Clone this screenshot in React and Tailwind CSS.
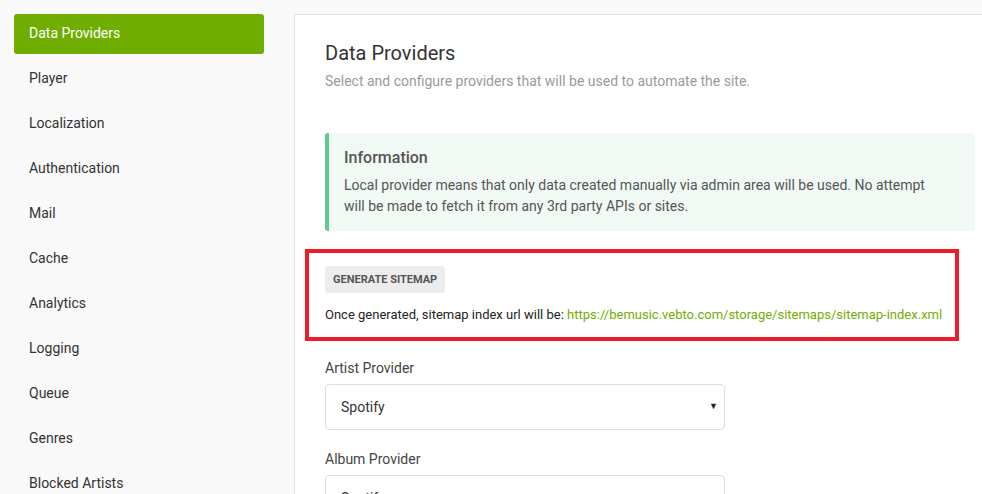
import React from 'react';

const navItems = [
  'Data Providers',
  'Player',
  'Localization',
  'Authentication',
  'Mail',
  'Cache',
  'Analytics',
  'Logging',
  'Queue',
  'Genres',
  'Blocked Artists',
];

const SelectBox = ({ value }) => (
  <div className="flex h-[46px] w-[400px] shrink-0 items-center justify-between rounded-[4px] border border-[#dcdcdc] bg-white pl-[15px] pr-[6px] text-[14px] text-[#333]">
    <span>{value}</span>
    <span className="text-[9px] text-[#222]">▼</span>
  </div>
);

export default function App() {
  return (
    <div
      className="flex h-[494px] w-[982px] overflow-hidden bg-[#f9f9f9]"
      style={{ fontFamily: 'Roboto, "Liberation Sans", sans-serif' }}
    >
      {/* Settings nav */}
      <nav className="flex w-[294px] shrink-0 flex-col gap-[5px] pl-[14px] pt-[13px]">
        {navItems.map((item, i) => (
          <div
            key={item}
            className={
              i === 0
                ? 'mt-[1px] -mb-[1px] flex h-[40px] w-[250px] shrink-0 items-center rounded-[3px] bg-[#6fae00] pb-[2px] pl-[15px] text-[14px] text-white'
                : 'flex h-[40px] w-[250px] shrink-0 items-center pl-[15px] text-[14px] text-[#333]'
            }
          >
            {item}
          </div>
        ))}
      </nav>

      {/* Main panel */}
      <main className="mt-[14px] flex flex-1 flex-col rounded-tl-[4px] border-l border-t border-[#e2e2e2] bg-white pl-[30px] pr-[7px] pt-[24px]">
        <h1 className="text-[20px] leading-[28px] text-[#333]">Data Providers</h1>
        <p className="mt-[4px] text-[14px] leading-[20px] text-[#9a9a9a]">
          Select and configure providers that will be used to automate the site.
        </p>

        <div className="mt-[42px] shrink-0 rounded-[3px] border-l-[4px] border-[#5fc98f] bg-[#f1f9f4] pb-[14px] pl-[15px] pr-[40px] pt-[15px]">
          <div className="text-[16px] font-medium leading-[20px] text-[#555]">Information</div>
          <p className="mt-[7px] text-[14px] leading-[21px] text-[#555]">
            Local provider means that only data created manually via admin area will be used. No attempt
            will be made to fetch it from any 3rd party APIs or sites.
          </p>
        </div>

        <div className="-ml-[20px] mt-[18px] w-[654px] shrink-0 border-[4px] border-[#ee1c25] pb-[13px] pl-[16px] pt-[13px]">
          <button className="h-[27px] rounded-[3px] bg-[#ececec] px-[8px] text-[11px] font-bold leading-[27px] text-[#555]">
            GENERATE SITEMAP
          </button>
          <p className="mt-[13px] text-[13px] leading-[18px] text-[#222]">
            Once generated, sitemap index url will be:{' '}
            <span className="text-[#6fae00]">https://bemusic.vebto.com/storage/sitemaps/sitemap-index.xml</span>
          </p>
        </div>

        <div className="mt-[17px] shrink-0">
          <label className="block text-[14px] leading-[20px] text-[#444]">Artist Provider</label>
          <div className="mt-[6px]">
            <SelectBox value="Spotify" />
          </div>
        </div>

        <div className="mt-[19px] shrink-0">
          <label className="block text-[14px] leading-[20px] text-[#444]">Album Provider</label>
          <div className="mt-[6px]">
            <SelectBox value="Spotify" />
          </div>
        </div>
      </main>
    </div>
  );
}
